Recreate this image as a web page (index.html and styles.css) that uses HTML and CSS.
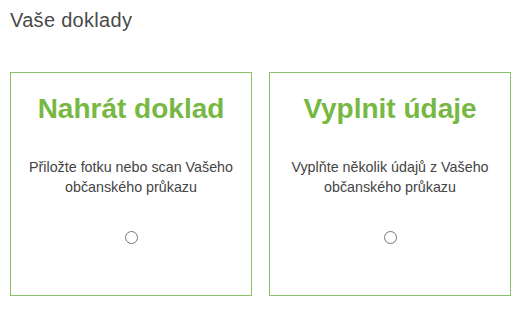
FILE: index.html
```html
<!DOCTYPE html>
<html lang="cs">
<head>
  <meta charset="UTF-8">
  <title>Vaše doklady</title>
  <link rel="stylesheet" href="styles.css">
</head>
<body>
  <h3 class="section-title">Vaše doklady</h3>
  <div class="options">
    <label class="option">
      <span class="option-title">Nahrát doklad</span>
      <span class="option-text">Přiložte fotku nebo scan Vašeho občanského průkazu</span>
      <input type="radio" name="doc-mode" value="upload">
    </label>
    <label class="option">
      <span class="option-title">Vyplnit údaje</span>
      <span class="option-text">Vyplňte několik údajů z Vašeho občanského průkazu</span>
      <input type="radio" name="doc-mode" value="manual">
    </label>
  </div>
</body>
</html>
```

FILE: styles.css
```css
body {
  font-family: Arial, "Liberation Sans", sans-serif;
  background: #fff;
  color: #444;
  margin: 0;
  padding: 8px 10px;
}
.section-title {
  font-size: 20px;
  font-weight: normal;
  letter-spacing: 0.3px;
  color: #4a4a4a;
  margin: 0 0 40px;
  line-height: 24px;
}
.options {
  display: flex;
  gap: 17px;
}
.option {
  display: flex;
  flex-direction: column;
  align-items: center;
  width: 242px;
  height: 224px;
  box-sizing: border-box;
  border: 1px solid #8cbf6a;
  padding: 20px 10px 0;
  text-align: center;
  cursor: pointer;
}
.option-title {
  color: #76b843;
  font-size: 28px;
  font-weight: bold;
  line-height: 32px;
}
.option-text {
  font-size: 14.3px;
  line-height: 20px;
  margin-top: 32px;
}
.option input {
  width: 13px;
  height: 13px;
  margin: 34px 0 0;
}
```
